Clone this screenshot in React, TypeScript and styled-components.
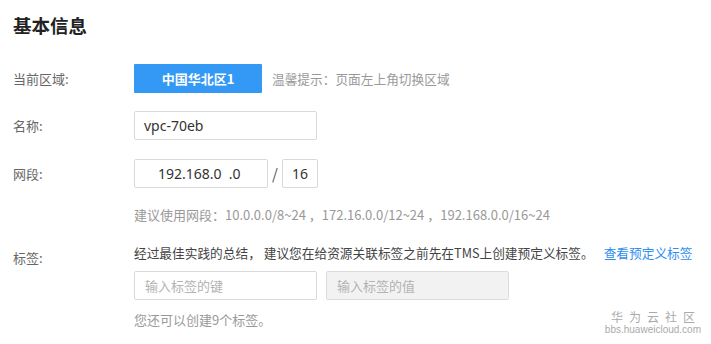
import React from "react";
import styled, { createGlobalStyle } from "styled-components";

const Global = createGlobalStyle`
  html, body { margin: 0; padding: 0; background: #fff; }
  body {
    font-family: "Microsoft YaHei", "Noto Sans CJK SC", "Noto Sans", sans-serif;
    color: #333;
  }
`;

const Page = styled.div`
  position: relative;
  width: 711px;
  height: 344px;
  box-sizing: border-box;
  padding: 12px 0 0 13px;
  overflow: hidden;
`;

const Title = styled.h2`
  margin: 0;
  font-size: 18.5px;
  line-height: 26px;
  font-weight: 700;
  color: #222;
`;

const Form = styled.div`
  display: flex;
  flex-direction: column;
  margin-top: 26px;
`;

const Row = styled.div<{ $gap?: number }>`
  display: grid;
  grid-template-columns: 121px auto;
  align-items: center;
  margin-bottom: ${(p) => p.$gap ?? 18}px;
`;

const Label = styled.div<{ $pt?: number }>`
  font-size: 13px;
  line-height: 18px;
  color: #666;
  padding-top: ${(p) => p.$pt ?? 0}px;
  align-self: ${(p) => (p.$pt ? "start" : "center")};
`;

const Inline = styled.div`
  display: flex;
  align-items: center;
`;

const Stack = styled.div`
  display: flex;
  flex-direction: column;
`;

const RegionButton = styled.div`
  width: 128px;
  height: 29px;
  box-sizing: border-box;
  background: #3399f5;
  color: #fff;
  font-weight: 700;
  font-size: 13px;
  display: flex;
  align-items: center;
  justify-content: center;
  border-radius: 1px;
`;

const Hint = styled.span`
  margin-left: 10px;
  font-size: 12.7px;
  color: #999;
`;

const Input = styled.div<{ $w: number; $pl?: number; $center?: boolean; $disabled?: boolean; $ph?: boolean }>`
  width: ${(p) => p.$w}px;
  height: 29px;
  box-sizing: border-box;
  border: 1px solid ${(p) => (p.$disabled ? "#dcdcdc" : "#d9d9d9")};
  border-radius: 2px;
  background: ${(p) => (p.$disabled ? "#f2f2f2" : "#fff")};
  display: flex;
  align-items: center;
  justify-content: ${(p) => (p.$center ? "center" : "flex-start")};
  padding-left: ${(p) => (p.$center ? 0 : p.$pl ?? 9)}px;
  font-family: ${(p) => (p.$ph ? `"Microsoft YaHei", "Noto Sans CJK SC", sans-serif` : `"Noto Sans", "Open Sans", sans-serif`)};
  font-size: ${(p) => (p.$ph ? 13 : 14)}px;
  color: ${(p) => (p.$ph ? "#b3b3b3" : "#333")};
  white-space: pre;
`;

const Slash = styled.span`
  width: 14px;
  text-align: center;
  font-size: 15px;
  color: #555;
`;

const Note = styled.div<{ $mt?: number }>`
  font-size: 13px;
  line-height: 18px;
  color: #999;
  margin-top: ${(p) => p.$mt ?? 0}px;
  white-space: nowrap;
`;

const Desc = styled.div`
  font-size: 12.7px;
  line-height: 18px;
  color: #444;
  margin-bottom: 9px;
  white-space: nowrap;
`;

const Link = styled.a`
  color: #2e8ef0;
  margin-left: 10px;
  text-decoration: none;
`;

const Pair = styled.div`
  display: flex;
  gap: 9px;
  margin-bottom: 11px;
`;

const Watermark = styled.div`
  position: absolute;
  right: 10px;
  bottom: 8px;
  display: flex;
  flex-direction: column;
  align-items: center;
  color: #aaa;
`;

const WmTitle = styled.div`
  font-size: 12px;
  letter-spacing: 6px;
  margin-right: -6px;
  line-height: 15px;
`;

const WmUrl = styled.div`
  font-family: "Liberation Sans", Arial, sans-serif;
  font-size: 10px;
  line-height: 12px;
`;

export default function App() {
  return (
    <Page>
      <Global />
      <Title>基本信息</Title>
      <Form>
        <Row $gap={18}>
          <Label>当前区域:</Label>
          <Inline>
            <RegionButton>中国华北区1</RegionButton>
            <Hint>温馨提示：页面左上角切换区域</Hint>
          </Inline>
        </Row>
        <Row $gap={19}>
          <Label>名称:</Label>
          <Inline>
            <Input $w={183}>vpc-70eb</Input>
          </Inline>
        </Row>
        <Row $gap={0}>
          <Label>网段:</Label>
          <Inline>
            <Input $w={134} $pl={23}>192.168.0  .0</Input>
            <Slash>/</Slash>
            <Input $w={36} $center>16</Input>
          </Inline>
        </Row>
        <Row $gap={20}>
          <div />
          <Note $mt={18}>建议使用网段：10.0.0.0/8~24 ，172.16.0.0/12~24 ，192.168.0.0/16~24</Note>
        </Row>
        <Row $gap={0}>
          <Label $pt={5}>标签:</Label>
          <Stack>
            <Desc>
              经过最佳实践的总结， 建议您在给资源关联标签之前先在TMS上创建预定义标签。
              <Link>查看预定义标签</Link>
            </Desc>
            <Pair>
              <Input $w={183} $ph $pl={10}>输入标签的键</Input>
              <Input $w={183} $ph $pl={10} $disabled>输入标签的值</Input>
            </Pair>
            <Note>您还可以创建9个标签。</Note>
          </Stack>
        </Row>
      </Form>
      <Watermark>
        <WmTitle>华为云社区</WmTitle>
        <WmUrl>bbs.huaweicloud.com</WmUrl>
      </Watermark>
    </Page>
  );
}
